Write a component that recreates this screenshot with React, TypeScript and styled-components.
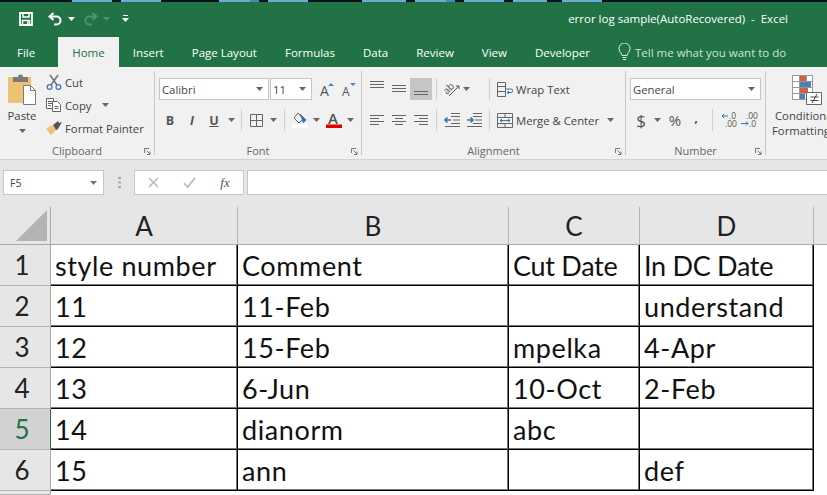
import React from 'react';
import styled, { createGlobalStyle } from 'styled-components';

const Global = createGlobalStyle`
  html, body { margin: 0; padding: 0; height: 100%; overflow: hidden; background: #fff; }
  #root { height: 100%; }
`;

const uiFont = `"Open Sans", "Noto Sans", sans-serif`;
const cellFont = `Lato, "Open Sans", sans-serif`;
const green = '#217346';

const Window = styled.div`
  width: 827px;
  height: 495px;
  overflow: hidden;
  font-family: ${uiFont};
  display: flex;
  flex-direction: column;
`;

/* the strip of other windows showing above the title bar */
const TopStrip = styled.div`
  height: 2px;
  flex: none;
  background: linear-gradient(90deg,
    #05121c 0 72px, #6fa8dc 72px 112px, #05121c 112px 121px, #6fa8dc 121px 161px,
    #05121c 161px 219px, #6fa8dc 219px 250px, #4f86b8 250px 259px, #05121c 259px 268px,
    #6fa8dc 268px 308px, #05121c 308px 362px, #6fa8dc 362px 406px, #05121c 406px 415px,
    #6fa8dc 415px 446px, #4f86b8 446px 455px, #05121c 455px 464px, #6fa8dc 464px 504px,
    #05121c 504px 513px, #6fa8dc 513px 547px, #05121c 547px 562px, #6fa8dc 562px 602px,
    #05121c 602px);
`;

const TitleBar = styled.div`
  height: 35px;
  flex: none;
  box-sizing: border-box;
  background: ${green};
  display: flex;
  align-items: center;
  padding: 0 39px 2px 19px;
  color: #fff;
`;

const Qat = styled.div`
  display: flex;
  align-items: center;
`;

const DocTitle = styled.div`
  margin-left: auto;
  font-size: 11.5px;
  white-space: pre;
`;

const TabRow = styled.div`
  height: 30px;
  flex: none;
  background: ${green};
  display: flex;
  align-items: stretch;
  padding-left: 3px;
`;

const Tab = styled.div<{ $active?: boolean }>`
  display: flex;
  align-items: center;
  padding: 0 14px;
  font-size: 11.5px;
  color: ${p => (p.$active ? green : '#fff')};
  background: ${p => (p.$active ? '#f1f1f1' : 'transparent')};
`;

const FileTab = styled(Tab)`
  margin-right: 9px;
`;

const TellMe = styled.div`
  display: flex;
  align-items: center;
  gap: 4px;
  margin-left: 14px;
  font-size: 11.5px;
  color: #cfe3d8;
`;

const Ribbon = styled.div`
  height: 93px;
  flex: none;
  box-sizing: border-box;
  background: #f1f1f1;
  border-bottom: 1px solid #d2d2d2;
  display: flex;
  color: #444;
  font-size: 11.3px;
`;

const Group = styled.div<{ $w: number }>`
  width: ${p => p.$w}px;
  flex: none;
  box-sizing: border-box;
  margin-top: 4px;
  height: 84px;
  border-right: 1px solid #c8c8c8;
  display: flex;
  flex-direction: column;
  position: relative;
`;

const GroupBody = styled.div`
  flex: 1;
  display: flex;
  min-height: 0;
`;

const GroupLabel = styled.div`
  height: 10px;
  line-height: 12px;
  text-align: center;
  font-size: 11px;
  color: #666;
`;

const Launcher = styled.svg`
  position: absolute;
  right: 3px;
  bottom: 0;
`;

const PasteCol = styled.div`
  width: 44px;
  flex: none;
  box-sizing: content-box;
  padding: 3px 2px 0 0;
  display: flex;
  flex-direction: column;
  align-items: center;
`;

const PasteText = styled.div`
  margin-top: 3px;
  line-height: 16px;
`;

const PasteCaret = styled.div`
  height: 14px;
  display: flex;
  align-items: center;
`;

const ClipStack = styled.div`
  padding-top: 1px;
  display: flex;
  flex-direction: column;
  gap: 3px;
`;

const ClipRow = styled.div`
  height: 20px;
  flex: none;
  display: flex;
  align-items: center;
  gap: 3px;
  white-space: nowrap;
`;

const ToolRows = styled.div<{ $pad: number }>`
  padding: 7px 0 0 ${p => p.$pad}px;
  display: flex;
  flex-direction: column;
  gap: 9px;
`;

const ToolRow = styled.div`
  height: 22px;
  flex: none;
  display: flex;
  align-items: center;
`;

const Combo = styled.div<{ $w: number }>`
  width: ${p => p.$w}px;
  height: 22px;
  box-sizing: border-box;
  flex: none;
  background: #fff;
  border: 1px solid #c6c6c6;
  margin-right: 1px;
  display: flex;
  align-items: center;
  justify-content: space-between;
  padding: 0 5px 0 2px;
  font-size: 11.3px;
  color: #444;
`;

const Slot = styled.div<{ $w: number; $on?: boolean }>`
  width: ${p => p.$w}px;
  height: 22px;
  flex: none;
  display: flex;
  align-items: center;
  justify-content: center;
  background: ${p => (p.$on ? '#c6c6c6' : 'transparent')};
  font-size: 12.5px;
  color: #555;
`;

const Glyph = styled(Slot)<{ $size: number; $lift?: number; $bold?: boolean }>`
  font-size: ${p => p.$size}px;
  font-weight: ${p => (p.$bold ? 700 : 400)};
  padding-bottom: ${p => p.$lift ?? 0}px;
  box-sizing: border-box;
`;

const Sep = styled.div<{ $m: number }>`
  width: 1px;
  height: 22px;
  flex: none;
  background: #d0d0d0;
  margin: 0 ${p => p.$m}px;
`;

const ToolIcon = styled.div`
  margin-left: 3px;
  height: 15px;
  display: flex;
`;

const ToolText = styled.span`
  margin-left: 3px;
  white-space: nowrap;
`;

const StyleCol = styled.div`
  padding: 8px 0 0 6px;
  display: flex;
  flex-direction: column;
  align-items: flex-start;
  white-space: nowrap;
  line-height: 15px;
`;

const StyleIcon = styled.div`
  margin: 0 0 3px 20px;
  height: 30px;
`;

const Conditional = styled.div`
  margin-left: 3px;
`;

const FormulaBar = styled.div`
  height: 47px;
  flex: none;
  box-sizing: border-box;
  background: #e6e6e6;
  padding: 10px 0 12px 3px;
  display: flex;
  align-items: stretch;
`;

const NameBox = styled.div`
  width: 101px;
  box-sizing: border-box;
  background: #fff;
  border: 1px solid #c6c6c6;
  display: flex;
  align-items: center;
  justify-content: space-between;
  padding: 0 6px;
  font-size: 10.5px;
  color: #444;
`;

const Dots = styled.div`
  width: 30px;
  display: flex;
  align-items: center;
  justify-content: center;
`;

const FnBox = styled.div`
  width: 110px;
  box-sizing: border-box;
  background: #fff;
  border: 1px solid #c6c6c6;
  margin-right: 3px;
  display: flex;
  align-items: center;
  justify-content: center;
  gap: 24px;
`;

const FxText = styled.span`
  font-family: "Liberation Serif", serif;
  font-style: italic;
  font-size: 13px;
  color: #555;
`;

const Formula = styled.div`
  flex: 1;
  background: #fff;
  border: 1px solid #c6c6c6;
  border-right: none;
`;

const Sheet = styled.div`
  flex: 1;
  display: grid;
  grid-template-columns: 51px 187px 271px 131px 174px 1fr;
  grid-template-rows: 38px repeat(6, 41px) 1fr;
  background: #fff;
  color: #111;
`;

const Corner = styled.div`
  background: #e6e6e6;
  border-right: 1px solid #a8a8a8;
  border-bottom: 1px solid #a8a8a8;
  position: relative;
  overflow: hidden;
  &::after {
    content: '';
    position: absolute;
    right: 3px;
    bottom: 3px;
    border-style: solid;
    border-width: 0 0 31px 31px;
    border-color: transparent transparent #b4b4b4 transparent;
  }
`;

const ColHead = styled.div`
  background: #e6e6e6;
  border-right: 1px solid #b4b4b4;
  border-bottom: 1px solid #a8a8a8;
  display: flex;
  align-items: center;
  justify-content: center;
  font-family: ${cellFont};
  font-size: 26px;
  color: #222;
`;

const ColFill = styled.div`
  background: #e6e6e6;
  border-bottom: 1px solid #a8a8a8;
`;

const RowHead = styled.div<{ $sel?: boolean }>`
  background: ${p => (p.$sel ? '#d2d2d2' : '#e6e6e6')};
  border-right: 1px solid ${p => (p.$sel ? green : '#a8a8a8')};
  border-bottom: 1px solid #b4b4b4;
  display: flex;
  align-items: center;
  justify-content: center;
  padding-right: 6px;
  font-family: ${cellFont};
  font-size: 26px;
  color: ${p => (p.$sel ? green : '#222')};
`;

// the shadow thickens the one-pixel border to the soft 1.5px line of the picture
const Cell = styled.div<{ $tight?: boolean }>`
  box-sizing: border-box;
  border-right: 1px solid #000;
  border-bottom: 1px solid #000;
  box-shadow: inset -1px -1px 0 #777;
  padding: 1px 0 0 4px;
  display: flex;
  align-items: center;
  font-family: ${cellFont};
  font-size: 27px;
  letter-spacing: ${p => (p.$tight ? '-0.3px' : '0.6px')};
  white-space: nowrap;
  overflow: hidden;
`;

/* ---- drawings ---- */

const Caret = ({ c = '#666' }: { c?: string }) => (
  <svg width="7" height="4" viewBox="0 0 7 4"><path d="M0 0h7L3.5 4z" fill={c} /></svg>
);

const SmallCaret = styled.span<{ $l: number; $r?: number }>`
  display: flex;
  margin: 0 ${p => p.$r ?? 0}px 0 ${p => p.$l}px;
`;

const SaveIcon = () => (
  <svg width="14" height="14" viewBox="0 0 14 14" fill="none" stroke="#fff" strokeWidth="1.8">
    <path d="M1 1h12v12H1z" />
    <path d="M4 1v4h6V1M3.500 13V8.500h7V13" strokeWidth="1.5" />
    <path d="M8 9.500h1.600V13H8z" fill="#fff" stroke="none" />
  </svg>
);

const UndoIcon = () => (
  <svg width="15" height="14" viewBox="0 0 15 14" fill="none" stroke="#fff" strokeWidth="2">
    <path d="M5.500 1L1.500 4.500L5.500 8" />
    <path d="M2 4.500h6.500a4 4 0 0 1 0 8H6" />
  </svg>
);

const RedoIcon = () => (
  <svg width="15" height="14" viewBox="0 0 15 14" fill="none" stroke="#4f9470" strokeWidth="2">
    <path d="M9.500 1l4 3.500L9.500 8" />
    <path d="M13 4.500H6.500a4 4 0 0 0 0 8H9" />
  </svg>
);

const BulbIcon = () => (
  <svg width="13" height="18" viewBox="0 0 13 18" fill="none" stroke="#e4efe9" strokeWidth="1">
    <path d="M4 12.500c0-2-3-3.500-3-7a5.500 5.500 0 0 1 11 0c0 3.500-3 5-3 7z" />
    <path d="M4.500 14.500h4M5 16.500h3" />
  </svg>
);

const PasteIcon = () => (
  <svg width="28" height="31" viewBox="0 0 28 31">
    <path d="M0 3h23v26H0z" fill="#eec275" />
    <path d="M5 3h5a2.500 2.500 0 0 1 5 0h5v5H5z" fill="#7b7b7b" />
    <path d="M15.500 11.500h7l5 5v14h-12z" fill="#fff" stroke="#7b7b7b" />
    <path d="M22.500 11.500v5h5" fill="none" stroke="#7b7b7b" />
  </svg>
);

const ScissorsIcon = () => (
  <svg width="16" height="16" viewBox="0 0 16 16" fill="none">
    <path d="M4 1l7 10M12 1L5 11" stroke="#777" strokeWidth="1.6" />
    <circle cx="3.600" cy="13" r="2.400" stroke="#3f73b6" strokeWidth="1.2" />
    <circle cx="12.400" cy="13" r="2.400" stroke="#3f73b6" strokeWidth="1.2" />
  </svg>
);

const CopyIcon = () => (
  <svg width="16" height="14" viewBox="0 0 16 14" fill="#fff" stroke="#666">
    <path d="M.5.5h7v10h-7z" />
    <path d="M6.500 3.500h5l3 3v7h-8z" />
    <path d="M2 3.500h4M2 5.500h4M2 7.500h3M8.500 8.500h4M8.500 10.500h4" fill="none" />
  </svg>
);

const BrushIcon = () => (
  <svg width="16" height="14" viewBox="0 0 16 14">
    <path d="M0 8l6-4 4 5-5 5z" fill="#eec275" />
    <path d="M7 4l5-4 1 2 3-1-4 7-2 1z" fill="#555" />
  </svg>
);

const Launch = () => (
  <Launcher width="7" height="7" viewBox="0 0 7 7" fill="none" stroke="#777">
    <path d="M.5 5V.5H5" />
    <path d="M2.500 2.500L6 6M6 3.500V6.500H3" />
  </Launcher>
);

const BorderIcon = () => (
  <svg width="13" height="13" viewBox="0 0 13 13" fill="none" stroke="#666">
    <path d="M.5.5h12v12H.5zM6.500.5v12M.5 6.500h12" />
  </svg>
);

const FillIcon = () => (
  <svg width="17" height="16" viewBox="0 0 17 16" fill="none">
    <path d="M6 1l5 6-4 4-5-5z" stroke="#666" />
    <path d="M8 2l6 6-3 3" fill="#2f75b5" stroke="#2f75b5" />
    <path d="M0 12.500h16v3.500H0z" fill="#fff" />
  </svg>
);

const GrowA = ({ up, size }: { up: boolean; size: number }) => (
  <svg width="16" height="16" viewBox="0 0 16 16" overflow="visible">
    <text x="2" y="15" fontFamily="Open Sans" fontSize={size} fill="#555">A</text>
    <path d={up ? 'M10 5l3-3 3 3z' : 'M10 2h6l-3 3z'} fill="#4a87c5" />
  </svg>
);

const ColorA = () => (
  <svg width="16" height="16" viewBox="0 0 16 16" overflow="visible">
    <text x="2" y="12" fontFamily="Open Sans" fontWeight="600" fontSize="15" fill="#555">A</text>
    <path d="M0 12.500h16v3.500H0z" fill="#e00000" />
  </svg>
);

// lines of an alignment glyph, x1/x2 per line
const LinesIcon = ({ rows, top }: { rows: [number, number][]; top: number }) => (
  <svg width="15" height="16" viewBox="0 0 15 16" stroke="#666">
    {rows.map(([a, b], i) => (
      <path key={i} d={`M${a} ${top + i * 3 + 0.5}H${b}`} />
    ))}
  </svg>
);

const OrientIcon = () => (
  <svg width="17" height="15" viewBox="0 0 17 15" fill="none" stroke="#666" overflow="visible">
    <text x="0" y="10" transform="rotate(-45 5 8)" fontFamily="Open Sans" fontSize="10" fill="#555" stroke="none">ab</text>
    <path d="M5 14L15 4M15 4h-3M15 4v3" stroke="#555" />
  </svg>
);

const WrapIcon = () => (
  <svg width="16" height="15" viewBox="0 0 16 15" fill="none" stroke="#666">
    <path d="M.5.5h8v14h-8zM.5 4.500h8M.5 9.500h8" />
    <path d="M8 7h6a1.500 1.500 0 0 1 0 3.500H11" stroke="#2f75b5" />
    <path d="M12 9l-2 1.500L12 12" stroke="#2f75b5" />
  </svg>
);

const MergeIcon = () => (
  <svg width="16" height="15" viewBox="0 0 16 15" fill="none" stroke="#666">
    <path d="M.5.5h15v14H.5zM.5 4.500h15M.5 10.500h15M8 .5v4M8 10.500v4" />
    <path d="M3 7.500h10M5 6L3 7.500 5 9M11 6l2 1.500L11 9" stroke="#2f75b5" />
  </svg>
);

const IndentIcon = ({ flip }: { flip: boolean }) => (
  <svg width="17" height="14" viewBox="0 0 17 14" fill="none">
    <path d="M7 .5h9M7 3.500h9M7 10.500h9M1 13.500h15" stroke="#666" />
    <path d="M7 7H1M3.500 4.500L1 7l2.500 2.500" stroke="#2f75b5" strokeWidth="1.6"
      transform={flip ? 'translate(8 0) scale(-1 1)' : undefined} />
    <path d="M9 7h7" stroke="#666" />
  </svg>
);

const DecimalIcon = ({ more }: { more: boolean }) => (
  <svg width="17" height="14" viewBox="0 0 17 14" overflow="visible">
    <text x={more ? 5 : 8} y="6" fontFamily="Open Sans" fontSize="8.500" fill="#555">{more ? '.00' : '.0'}</text>
    <text x={more ? 8 : 4} y="13.500" fontFamily="Open Sans" fontSize="8.500" fill="#555">{more ? '.0' : '.00'}</text>
    <path d={more ? 'M0 10.500h7M5 8.500l2 2-2 2' : 'M7 3H1M3 1L1 3l2 2'} stroke="#2f75b5" fill="none" />
  </svg>
);

const ConditionalIcon = () => (
  <svg width="30" height="30" viewBox="0 0 30 30" fill="#fff" stroke="#999">
    <path d="M.5.5h20v24H.5z" fill="#fff" />
    <path d="M.5 6.500h20M.5 12.500h20M.5 18.500h20M7.500.5v24M14.500.5v24" fill="none" />
    <path d="M8 1h6v5H8z" fill="#d2603a" stroke="none" />
    <path d="M8 7h11v5H8z" fill="#4a80bd" stroke="none" />
    <path d="M8 13h8v5H8z" fill="#d2603a" stroke="none" />
    <path d="M8 19h5v5H8z" fill="#4a80bd" stroke="none" />
    <path d="M14.500 17.500h15v12h-15z" stroke="#666" />
    <path d="M18.500 22h8M18.500 25.500h8M25 19l-5 9" fill="none" stroke="#444" />
  </svg>
);

const left: [number, number][] = [[0, 14], [0, 9], [0, 14], [0, 9]];
const center: [number, number][] = [[0, 14], [3, 11], [0, 14], [3, 11]];
const right: [number, number][] = [[0, 14], [5, 14], [0, 14], [5, 14]];
const three: [number, number][] = [[0, 14], [0, 14], [0, 14]];

const tabs = ['Insert', 'Page Layout', 'Formulas', 'Data', 'Review', 'View', 'Developer'];

const heads = ['A', 'B', 'C', 'D'];

const rows = [
  ['style number', 'Comment', 'Cut Date', 'In DC Date'],
  ['11', '11-Feb', '', 'understand'],
  ['12', '15-Feb', 'mpelka', '4-Apr'],
  ['13', '6-Jun', '10-Oct', '2-Feb'],
  ['14', 'dianorm', 'abc', ''],
  ['15', 'ann', '', 'def'],
];

const App: React.FC = () => (
  <Window>
    <Global />
    <TopStrip />
    <TitleBar>
      <Qat>
        <SaveIcon />
        <Slot $w={15} />
        <UndoIcon />
        <SmallCaret $l={5} $r={8}><Caret c="#fff" /></SmallCaret>
        <RedoIcon />
        <SmallCaret $l={5} $r={7}><Caret c="#4f9470" /></SmallCaret>
        <Slot $w={16}>
          <svg width="7" height="7" viewBox="0 0 7 7" fill="#fff"><path d="M1 0h5v1H1zM0 3h7L3.500 7z" /></svg>
        </Slot>
      </Qat>
      <DocTitle>{'error log sample(AutoRecovered)  -  Excel'}</DocTitle>
    </TitleBar>
    <TabRow>
      <FileTab>File</FileTab>
      <Tab $active>Home</Tab>
      {tabs.map(t => <Tab key={t}>{t}</Tab>)}
      <TellMe><BulbIcon />Tell me what you want to do</TellMe>
    </TabRow>
    <Ribbon>
      <Group $w={155}>
        <GroupBody>
          <PasteCol>
            <PasteIcon />
            <PasteText>Paste</PasteText>
            <PasteCaret><Caret /></PasteCaret>
          </PasteCol>
          <ClipStack>
            <ClipRow><ScissorsIcon />Cut</ClipRow>
            <ClipRow><CopyIcon />Copy<SmallCaret $l={8}><Caret /></SmallCaret></ClipRow>
            <ClipRow><BrushIcon />Format Painter</ClipRow>
          </ClipStack>
        </GroupBody>
        <GroupLabel>Clipboard</GroupLabel>
        <Launch />
      </Group>
      <Group $w={207}>
        <GroupBody>
          <ToolRows $pad={4}>
            <ToolRow>
              <Combo $w={110}>Calibri<Caret /></Combo>
              <Combo $w={42}>11<Caret /></Combo>
              <Slot $w={26}><GrowA up size={14} /></Slot>
              <Slot $w={18}><GrowA up={false} size={12} /></Slot>
            </ToolRow>
            <ToolRow>
              <Slot $w={22}><b>B</b></Slot>
              <Slot $w={22}><i><b>I</b></i></Slot>
              <Slot $w={22}><u><b>U</b></u></Slot>
              <Slot $w={12}><Caret /></Slot>
              <Sep $m={4} />
              <Slot $w={21}><BorderIcon /></Slot>
              <Slot $w={12}><Caret /></Slot>
              <Sep $m={5} />
              <Slot $w={20}><FillIcon /></Slot>
              <Slot $w={12}><Caret /></Slot>
              <Slot $w={24}><ColorA /></Slot>
              <Slot $w={8}><Caret /></Slot>
            </ToolRow>
          </ToolRows>
        </GroupBody>
        <GroupLabel>Font</GroupLabel>
        <Launch />
      </Group>
      <Group $w={264}>
        <GroupBody>
          <ToolRows $pad={4}>
            <ToolRow>
              <Slot $w={22}><LinesIcon rows={three} top={0} /></Slot>
              <Slot $w={22}><LinesIcon rows={three} top={4} /></Slot>
              <Slot $w={22} $on><LinesIcon rows={three} top={10} /></Slot>
              <Sep $m={4} />
              <Slot $w={22}><OrientIcon /></Slot>
              <Slot $w={7}><Caret /></Slot>
              <Slot $w={15} />
              <Sep $m={4} />
              <ToolIcon><WrapIcon /></ToolIcon>
              <ToolText>Wrap Text</ToolText>
            </ToolRow>
            <ToolRow>
              <Slot $w={22}><LinesIcon rows={left} top={3} /></Slot>
              <Slot $w={22}><LinesIcon rows={center} top={3} /></Slot>
              <Slot $w={22}><LinesIcon rows={right} top={3} /></Slot>
              <Sep $m={4} />
              <Slot $w={22}><IndentIcon flip={false} /></Slot>
              <Slot $w={22}><IndentIcon flip /></Slot>
              <Sep $m={4} />
              <ToolIcon><MergeIcon /></ToolIcon>
              <ToolText>Merge &amp; Center</ToolText>
              <SmallCaret $l={8}><Caret /></SmallCaret>
            </ToolRow>
          </ToolRows>
        </GroupBody>
        <GroupLabel>Alignment</GroupLabel>
        <Launch />
      </Group>
      <Group $w={140}>
        <GroupBody>
          <ToolRows $pad={4}>
            <ToolRow>
              <Combo $w={131}>General<Caret /></Combo>
            </ToolRow>
            <ToolRow>
              <Glyph $w={22} $size={17}>$</Glyph>
              <Slot $w={10}><Caret /></Slot>
              <Glyph $w={26} $size={15}>%</Glyph>
              <Glyph $w={16} $size={13} $lift={7} $bold>,</Glyph>
              <Sep $m={8} />
              <Slot $w={17}><DecimalIcon more={false} /></Slot>
              <Slot $w={3} />
              <Slot $w={17}><DecimalIcon more /></Slot>
            </ToolRow>
          </ToolRows>
        </GroupBody>
        <GroupLabel>Number</GroupLabel>
        <Launch />
      </Group>
      <StyleCol>
        <StyleIcon><ConditionalIcon /></StyleIcon>
        <Conditional>Conditional</Conditional>
        <div>Formatting</div>
      </StyleCol>
    </Ribbon>
    <FormulaBar>
      <NameBox>F5<Caret c="#777" /></NameBox>
      <Dots>
        <svg width="3" height="11" viewBox="0 0 3 11" fill="#aaa"><path d="M0 0h3v2H0zM0 4.500h3v2H0zM0 9h3v2H0z" /></svg>
      </Dots>
      <FnBox>
        <svg width="11" height="11" viewBox="0 0 11 11" stroke="#bbb" strokeWidth="1.6"><path d="M1 1l9 9M10 1l-9 9" /></svg>
        <svg width="13" height="11" viewBox="0 0 13 11" fill="none" stroke="#bbb" strokeWidth="1.8"><path d="M1 6l3.500 4L12 1" /></svg>
        <FxText>fx</FxText>
      </FnBox>
      <Formula />
    </FormulaBar>
    <Sheet>
      <Corner />
      {heads.map(h => <ColHead key={h}>{h}</ColHead>)}
      <ColFill />
      {rows.map((r, i) => (
        <React.Fragment key={i}>
          <RowHead $sel={i === 4}>{i + 1}</RowHead>
          {r.map((v, j) => <Cell key={j} $tight={i === 0 && j >= 2}>{v}</Cell>)}
          <div />
        </React.Fragment>
      ))}
      <RowHead />
    </Sheet>
  </Window>
);

export default App;
